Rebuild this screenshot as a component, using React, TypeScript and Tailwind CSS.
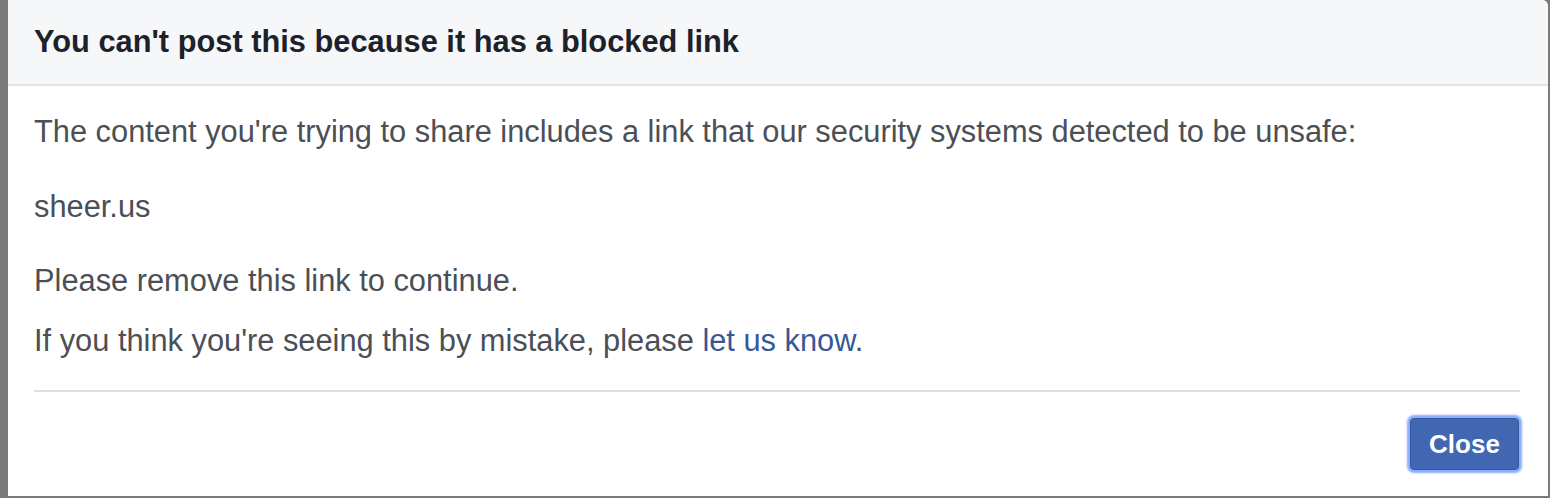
import React from "react";

export default function App() {
  return (
    <div
      className="w-[1550px] h-[498px] bg-[#7a7a7a] pl-[8px] pr-[2px] pb-[2px] overflow-hidden"
      style={{ fontFamily: '"Liberation Sans", Arial, sans-serif' }}
    >
      <div className="w-full h-full bg-white rounded-tr-[6px] flex flex-col overflow-hidden">
        <div className="h-[86px] shrink-0 bg-[#f6f7f9] border-b-2 border-[#e5e5e5] flex items-center px-[26px]">
          <h1 className="text-[30.8px] font-bold text-[#1d2129] leading-none">
            You can't post this because it has a blocked link
          </h1>
        </div>
        <div className="px-[26px] pt-[30px] text-[30.8px] leading-[32px] text-[#4b4f56]">
          <p>The content you're trying to share includes a link that our security systems detected to be unsafe:</p>
          <p className="mt-[43px]">sheer.us</p>
          <p className="mt-[42px]">Please remove this link to continue.</p>
          <p className="mt-[28px]">
            If you think you're seeing this by mistake, please{" "}
            <a className="text-[#365899]">let us know</a>.
          </p>
        </div>
        <div className="ml-[26px] mr-[28px] mt-[33px] border-t-2 border-[#dddfe2]" />
        <div className="flex justify-end pr-[29px] pt-[26px]">
          <button className="w-[109px] h-[52px] rounded-[4px] bg-[#4267b2] border border-[#365899] text-white font-bold text-[26px] shadow-[0_0_2px_3px_rgba(98,146,255,0.75)]">
            Close
          </button>
        </div>
      </div>
    </div>
  );
}
